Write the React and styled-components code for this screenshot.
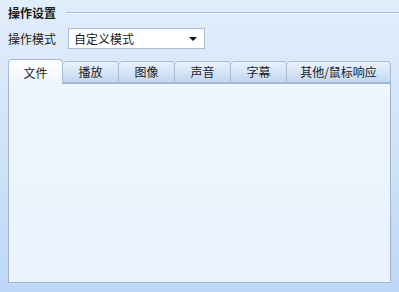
import React, { useState } from "react";
import styled, { createGlobalStyle } from "styled-components";

const GlobalStyle = createGlobalStyle`
  html, body {
    margin: 0;
    padding: 0;
    height: 100%;
  }
  body {
    font-family: "Noto Sans CJK SC", "Liberation Sans", sans-serif;
    font-size: 12px;
    color: #1c1c1c;
    background: linear-gradient(to bottom, #e2edfb 0%, #d2e4f8 45%, #bdd8f6 100%);
  }
  #root {
    height: 100%;
  }
`;

const Page = styled.div`
  width: 399px;
  height: 292px;
  box-sizing: border-box;
  padding: 5px 8px 0 8px;
  display: flex;
  flex-direction: column;
`;

const Header = styled.div`
  display: flex;
  align-items: center;
  height: 16px;
  gap: 10px;
`;

const Title = styled.div`
  font-weight: bold;
  font-size: 12px;
  line-height: 16px;
  color: #1a1a1a;
`;

const Rule = styled.div`
  flex: 1;
  height: 1px;
  background: #a8bdd6;
  border-bottom: 1px solid #f4f8fd;
  margin-right: -8px;
`;

const ModeRow = styled.div`
  display: flex;
  align-items: center;
  margin-top: 7px;
  height: 21px;
`;

const Label = styled.div`
  width: 60px;
  line-height: 21px;
`;

const Select = styled.div`
  width: 137px;
  height: 21px;
  box-sizing: border-box;
  border: 1px solid #a9bdd4;
  background: #ffffff;
  display: flex;
  align-items: center;
  justify-content: space-between;
  padding: 0 7px 0 5px;
`;

const Arrow = styled.span`
  width: 0;
  height: 0;
  border-left: 4px solid transparent;
  border-right: 4px solid transparent;
  border-top: 4px solid #111;
  margin-top: 1px;
`;

const TabStrip = styled.div`
  display: flex;
  align-items: flex-end;
  margin-top: 10px;
  height: 24px;
  position: relative;
  z-index: 1;
`;

const Tab = styled.div`
  box-sizing: border-box;
  width: ${(p) => p.$w}px;
  height: ${(p) => (p.$active ? 25 : 22)}px;
  margin-bottom: ${(p) => (p.$active ? -1 : 0)}px;
  border: 1px solid #a6bcd5;
  border-bottom: ${(p) => (p.$active ? "none" : "1px solid #a6bcd5")};
  border-left: ${(p) => (p.$first || p.$active ? "1px solid #a6bcd5" : "none")};
  border-radius: 4px 4px 0 0;
  background: ${(p) =>
    p.$active
      ? "linear-gradient(to bottom, #ffffff 0%, #f6f9fe 60%, #eef5fe 100%)"
      : "linear-gradient(to bottom, #eaf2fc 0%, #d6e5f7 50%, #c2d7f1 100%)"};
  display: flex;
  align-items: center;
  justify-content: center;
  line-height: 20px;
  padding-top: ${(p) => (p.$active ? 1 : 0)}px;
  color: #1c1c1c;
  cursor: default;
`;

const Panel = styled.div`
  width: 383px;
  height: 200px;
  box-sizing: border-box;
  border: 1px solid #9fb5cd;
  background: linear-gradient(to bottom, #eef5fe 0%, #eaf3fe 100%);
`;

const tabs = [
  { label: "文件", w: 55 },
  { label: "播放", w: 56 },
  { label: "图像", w: 56 },
  { label: "声音", w: 56 },
  { label: "字幕", w: 56 },
  { label: "其他/鼠标响应", w: 104 },
];

export default function App() {
  const [active, setActive] = useState(0);
  return (
    <>
      <GlobalStyle />
      <Page>
        <Header>
          <Title>操作设置</Title>
          <Rule />
        </Header>
        <ModeRow>
          <Label>操作模式</Label>
          <Select>
            <span>自定义模式</span>
            <Arrow />
          </Select>
        </ModeRow>
        <TabStrip>
          {tabs.map((t, i) => (
            <Tab
              key={t.label}
              $w={t.w}
              $first={i === 0}
              $active={i === active}
              onClick={() => setActive(i)}
            >
              {t.label}
            </Tab>
          ))}
        </TabStrip>
        <Panel />
      </Page>
    </>
  );
}
